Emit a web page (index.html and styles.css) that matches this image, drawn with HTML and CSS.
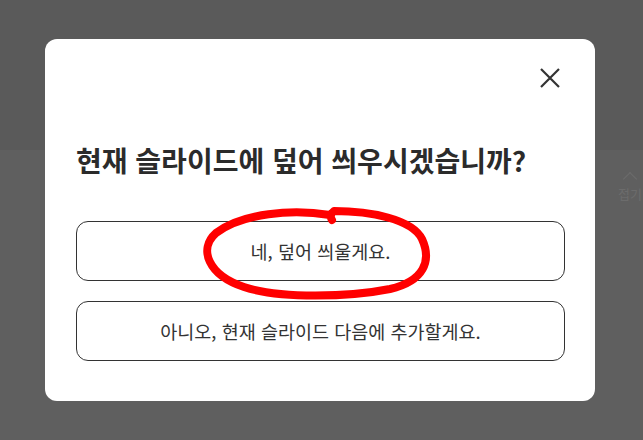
FILE: index.html
```html
<!DOCTYPE html>
<html lang="ko">
<head>
  <meta charset="UTF-8" />
  <title>슬라이드 덮어쓰기</title>
  <link rel="stylesheet" href="styles.css">
</head>
<body>
  <div class="side-fold">
    <span class="fold-arrow"></span>
    <span class="fold-label">접기</span>
  </div>

  <div class="modal">
    <div class="modal-head">
      <button class="close-btn" type="button" aria-label="닫기">
        <svg width="20" height="20" viewBox="0 0 20 20">
          <path d="M1 1 L19 19 M19 1 L1 19" stroke="#333" stroke-width="2.2" fill="none" />
        </svg>
      </button>
    </div>

    <h2 class="modal-title">현재 슬라이드에 덮어 씌우시겠습니까?</h2>

    <div class="choice-list">
      <button class="choice" type="button">네, 덮어 씌울게요.</button>
      <button class="choice" type="button">아니오, 현재 슬라이드 다음에 추가할게요.</button>
    </div>

    <!-- hand-drawn highlight over the first choice -->
    <svg class="mark" width="240" height="100" viewBox="0 0 240 100">
      <path d="M130 10 C 92 4, 42 8, 16 28 C -2 44, 8 70, 44 82 C 80 94, 150 92, 190 84 C 224 76, 232 56, 222 34 C 212 14, 170 6, 134 6 C 131 8, 130 12, 132 15"
            stroke="#f00" stroke-width="8" fill="none" stroke-linecap="round" stroke-linejoin="round" />
    </svg>
  </div>
</body>
</html>
```

FILE: styles.css
```css
body {
  margin: 0;
  padding-right: 3px;
  height: 100vh;
  font-family: 'Noto Sans CJK KR', 'Noto Sans', sans-serif;
  background: linear-gradient(180deg, #5a5a5a 0, #5a5a5a 150px, #5f5f5f 150px, #5f5f5f 100%);
  display: flex;
  align-items: center;
  justify-content: center;
  overflow: hidden;
}
.side-fold {
  position: absolute;
  top: 168px;
  left: 618px;
  display: flex;
  flex-direction: column;
  align-items: center;
  color: #6c6c6c;
}
.fold-arrow {
  width: 9px;
  height: 9px;
  border-left: 1.5px solid #6c6c6c;
  border-top: 1.5px solid #6c6c6c;
  transform: rotate(45deg);
  margin-top: 6px;
}
.fold-label {
  font-size: 13px;
  line-height: 16px;
  margin-top: 2px;
}
.modal {
  position: relative;
  box-sizing: border-box;
  width: 550px;
  height: 362px;
  background: #fff;
  border-radius: 12px;
  padding: 25px 30px 40px 31px;
  display: flex;
  flex-direction: column;
}
.modal-head {
  display: flex;
  justify-content: flex-end;
  margin-right: 1px;
}
.close-btn {
  width: 28px;
  height: 28px;
  padding: 0;
  border: none;
  background: none;
  display: flex;
  align-items: center;
  justify-content: center;
  cursor: pointer;
}
.modal-title {
  margin: 49px 0 0 0;
  font-size: 28px;
  line-height: 38px;
  font-weight: 700;
  color: #2b2b2b;
}
.choice-list {
  margin-top: 42px;
  display: flex;
  flex-direction: column;
  gap: 20px;
}
.choice {
  height: 60px;
  border: 1px solid #333;
  border-radius: 12px;
  background: #fff;
  font-family: inherit;
  font-size: 18.5px;
  color: #333;
  cursor: pointer;
}
.mark {
  position: absolute;
  left: 155px;
  top: 166px;
  pointer-events: none;
}
```
